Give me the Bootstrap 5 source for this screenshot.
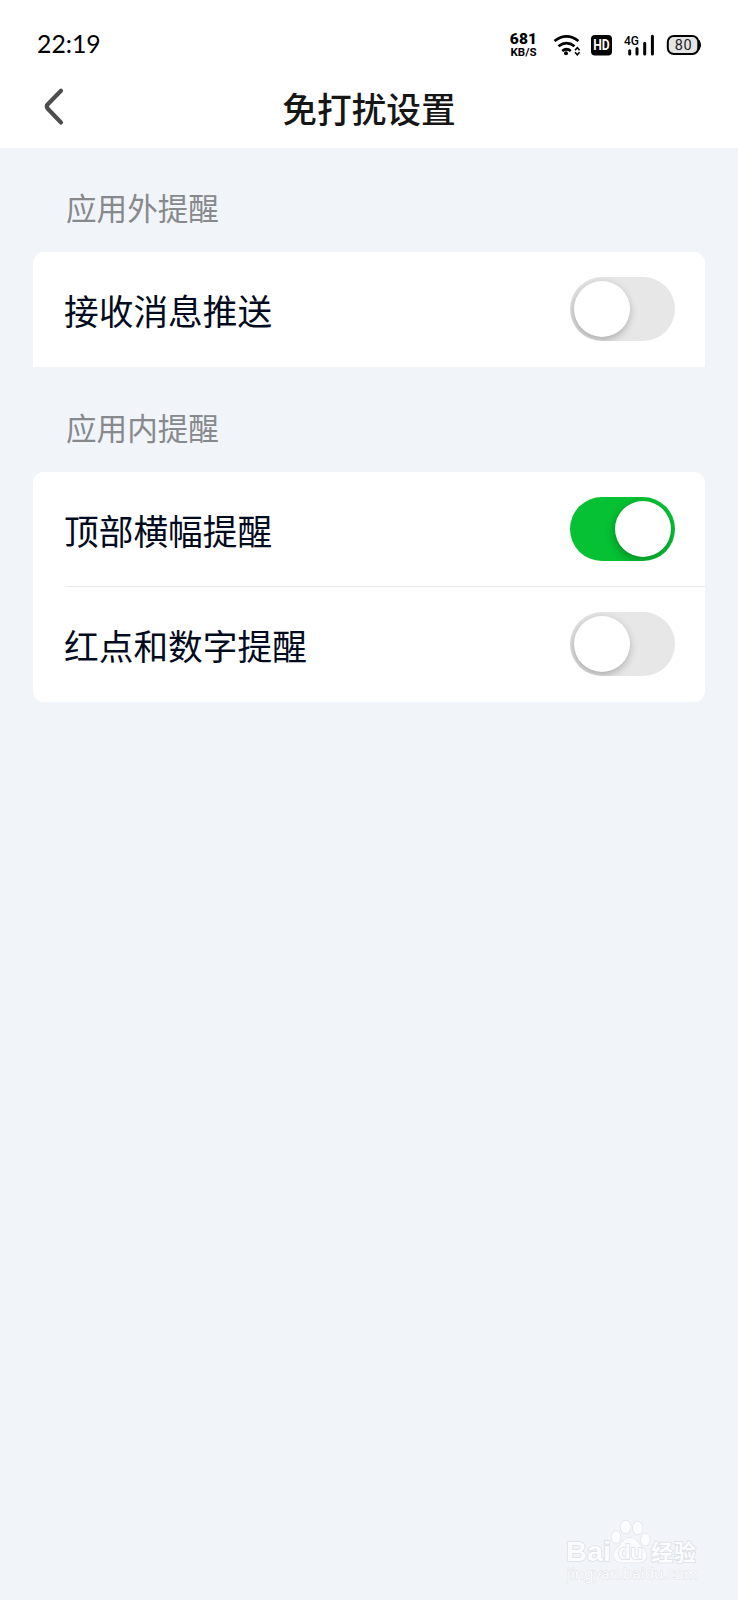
<!DOCTYPE html>
<html lang="zh-CN">
<head>
<meta charset="utf-8">
<meta name="viewport" content="width=device-width, initial-scale=1">
<title>免打扰设置</title>
<link rel="stylesheet" href="https://cdn.jsdelivr.net/npm/bootstrap@5.3.0/dist/css/bootstrap.min.css">
<style>
body{background:#f1f5fa;font-family:"Noto Sans CJK SC",sans-serif;min-height:1600px}
.app-head{height:148px}
.status-bar{height:83px;padding:7px 36px 0 37px;color:#000}
.clock{font:400 24.8px/30px Lato,sans-serif;padding-bottom:2px}
.speed{font-family:Roboto,sans-serif;font-weight:700;width:29px}
.speed b{font-size:15.5px;line-height:14px;letter-spacing:.1px}
.speed span{font-size:11.5px;line-height:12px}
.title-row{height:65px}
.page-title{font-size:34.7px;line-height:50px;font-weight:500;color:#161616}
.back{left:40px;top:3px}
.group{padding:0 33px}
.caption-row{font-size:30.6px;line-height:44px;font-weight:400;color:#88898d;padding-left:33px}
.settings{border-radius:11px;overflow:hidden;background:#fff}
.settings.flat-end{border-radius:11px 11px 0 0}
.setting{height:115px;padding:0 30px 0 31px;position:relative}
.setting + .setting::before{content:"";position:absolute;top:-1px;left:33px;right:0;height:1px;background:#e9e9ec}
.setting label{font-size:34.7px;line-height:50px;color:#030b20}
.toggle{appearance:none;width:105px;height:64px;border-radius:32px;background:#e7e7e7;position:relative;overflow:hidden;margin:0 0 1px;flex:none}
.toggle::after{content:"";position:absolute;width:56px;height:56px;border-radius:50%;background:#fff;left:4px;top:4px;box-shadow:-1px 3px 8px rgba(0,0,0,.28)}
.toggle:checked{background:#05c133}
.toggle:checked::after{left:45px}
.watermark{right:36px;bottom:14px}
</style>
</head>
<body class="d-flex flex-column position-relative">
<header class="app-head bg-white">
  <div class="status-bar d-flex align-items-center justify-content-between">
    <span class="clock">22:19</span>
    <div class="d-flex align-items-center">
      <div class="speed d-flex flex-column align-items-center"><b>681</b><span>KB/S</span></div>
      <svg width="164" height="30" viewBox="538 30 164 30" fill="none" stroke="#000">
        <path d="M554.5 41Q566.5 31.8 578.5 41M558.5 46.3Q566.5 40 574.5 46.3M562.2 51Q566.5 47.5 570.8 51" stroke-width="2.7"/>
        <circle cx="566" cy="53.3" r="2" fill="#000" stroke="none"/>
        <path d="M575 50.2l2.3-2.5 2.3 2.5M575 52.2l2.3 2.5 2.3-2.500" stroke-width="1.6"/>
        <rect x="591" y="35" width="21" height="20.5" rx="4" fill="#000" stroke="none"/>
        <text x="601.5" y="50.3" text-anchor="middle" font-family="Roboto,sans-serif" font-weight="700" font-size="14" textLength="16.500" lengthAdjust="spacingAndGlyphs" fill="#fff" stroke="none">HD</text>
        <text x="624" y="44.800" font-family="Roboto,sans-serif" font-weight="500" font-size="13" textLength="15" lengthAdjust="spacingAndGlyphs" fill="#000" stroke="none">4G</text>
        <path d="M629.7 50.700v3.300M637 48.500v5.500M644.7 43.200v10.800M652.4 36.300v17.700" stroke-width="3" stroke-linecap="round"/>
        <rect x="667.8" y="36" width="30.5" height="18" rx="6" fill="#e4e4e4" stroke-width="2"/>
        <path d="M699.3 40.5q2.6 4.5 0 9z" fill="#000" stroke-width="1"/>
        <text x="683.2" y="50.2" text-anchor="middle" font-family="Roboto,sans-serif" font-size="14.5" textLength="17" fill="#222" stroke="none">80</text>
      </svg>
    </div>
  </div>
  <div class="title-row position-relative text-center">
    <svg class="back position-absolute" width="30" height="42" viewBox="40 86 30 42" fill="none" stroke="#4d4d4d" stroke-width="4.2" stroke-linecap="round" stroke-linejoin="round"><path d="M61 90.8L47.8 104.2Q45.8 106.5 47.8 108.8L61 122.5"/></svg>
    <h1 class="page-title m-0">免打扰设置</h1>
  </div>
</header>
<main class="flex-grow-1">
  <section class="group">
    <h2 class="caption-row m-0" style="padding-top:37px;padding-bottom:23px">应用外提醒</h2>
    <div class="settings flat-end">
      <div class="setting d-flex align-items-center justify-content-between"><label for="push">接收消息推送</label><input id="push" class="toggle" type="checkbox" role="switch"></div>
    </div>
  </section>
  <section class="group">
    <h2 class="caption-row m-0" style="padding-top:38px;padding-bottom:23px">应用内提醒</h2>
    <div class="settings">
      <div class="setting d-flex align-items-center justify-content-between"><label for="banner">顶部横幅提醒</label><input id="banner" class="toggle" type="checkbox" role="switch" checked></div>
      <div class="setting d-flex align-items-center justify-content-between"><label for="dots">红点和数字提醒</label><input id="dots" class="toggle" type="checkbox" role="switch"></div>
    </div>
  </section>
</main>
<svg class="watermark position-absolute" width="138" height="68" viewBox="564 1518 138 68" fill="#fbfcfe" stroke="#dde0e5" stroke-width="1.6" paint-order="stroke">
  <text x="566" y="1560.5" font-family="Liberation Sans,sans-serif" font-weight="700" font-size="28" textLength="45" lengthAdjust="spacingAndGlyphs">Bai</text>
  <g stroke-width="1.1"><ellipse cx="616" cy="1537" rx="4.6" ry="6"/><ellipse cx="625.7" cy="1527" rx="5" ry="6.5"/><ellipse cx="637.7" cy="1528" rx="5" ry="6.5"/><ellipse cx="645.3" cy="1539.5" rx="4.6" ry="6"/>
  <path d="M630 1538c-6 0-8 5-11 8-4 4-6 7-5 11 2 7 9 5.500 16 5.500s14 1.500 16-5c1-4-1-8-5-11.500-3-3-5-8-11-8z"/></g>
  <text x="630.500" y="1559" text-anchor="middle" font-family="Liberation Sans,sans-serif" font-weight="700" font-size="20">du</text>
  <text x="651" y="1560" font-family="Noto Sans CJK SC,sans-serif" font-weight="700" font-size="22" textLength="45">经验</text>
  <text x="567" y="1579" font-family="Noto Sans,sans-serif" font-size="14.500" textLength="131" lengthAdjust="spacingAndGlyphs" stroke-width=".9">jingyan.baidu.com</text>
</svg>
<script src="https://cdn.jsdelivr.net/npm/bootstrap@5.3.0/dist/js/bootstrap.bundle.min.js"></script>
</body>
</html>
